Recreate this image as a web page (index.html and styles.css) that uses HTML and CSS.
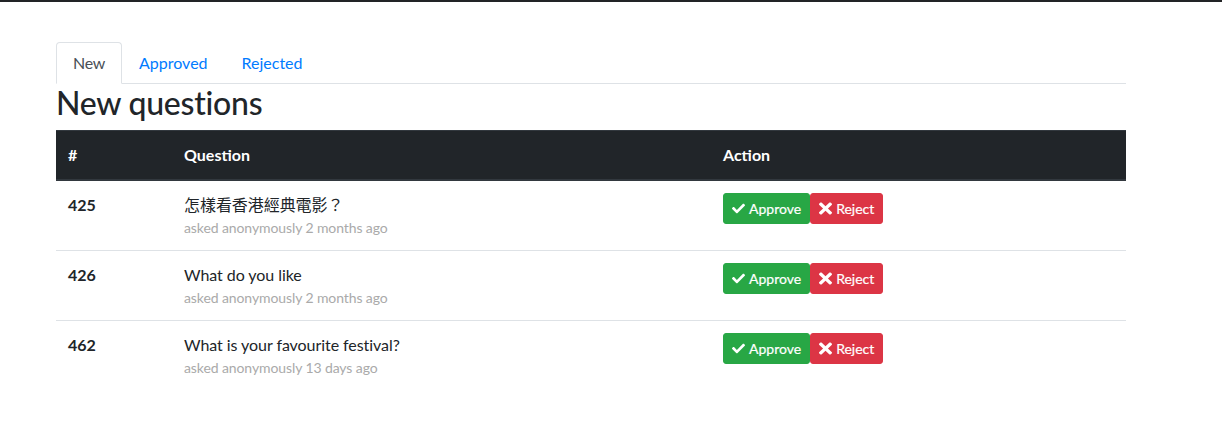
FILE: index.html
```html
<!DOCTYPE html>
<html lang="en">
<head>
<meta charset="utf-8">
<title>New questions</title>
<link rel="stylesheet" href="styles.css">
</head>
<body>
<div class="topbar"></div>
<div class="container">
  <ul class="tabs">
    <li class="tab active">New</li>
    <li class="tab">Approved</li>
    <li class="tab">Rejected</li>
  </ul>
  <h2 class="title">New questions</h2>
  <table class="qtable">
    <thead>
      <tr><th class="c-id">#</th><th class="c-q">Question</th><th class="c-a">Action</th></tr>
    </thead>
    <tbody>
      <tr>
        <td class="num">425</td>
        <td><div class="q">怎樣看香港經典電影？</div><div class="meta">asked anonymously 2 months ago</div></td>
        <td><span class="btns"><button class="btn ok"><svg class="ic-check" viewBox="0 0 512 512"><path d="M173.898 439.404l-166.4-166.4c-9.997-9.997-9.997-26.206 0-36.204l36.203-36.204c9.997-9.998 26.207-9.998 36.204 0L192 312.69 432.095 72.596c9.997-9.997 26.207-9.997 36.204 0l36.203 36.204c9.997 9.997 9.997 26.206 0 36.204l-294.4 294.401c-9.998 9.997-26.207 9.997-36.204-.001z"/></svg> Approve</button><button class="btn no"><svg class="ic-x" viewBox="0 64 352 384" preserveAspectRatio="none"><path d="M242.72 256l100.07-100.07c12.28-12.28 12.28-32.19 0-44.48l-22.24-22.24c-12.28-12.28-32.19-12.28-44.48 0L176 189.28 75.930 89.21c-12.28-12.28-32.19-12.28-44.48 0L9.21 111.45c-12.28 12.28-12.28 32.19 0 44.48L109.28 256 9.21 356.07c-12.28 12.280-12.28 32.19 0 44.48l22.24 22.24c12.28 12.28 32.2 12.28 44.48 0L176 322.72l100.07 100.07c12.28 12.28 32.2 12.28 44.48 0l22.24-22.24c12.28-12.28 12.28-32.19 0-44.48L242.72 256z"/></svg> Reject</button></span></td>
      </tr>
      <tr>
        <td class="num">426</td>
        <td><div class="q">What do you like</div><div class="meta">asked anonymously 2 months ago</div></td>
        <td><span class="btns"><button class="btn ok"><svg class="ic-check" viewBox="0 0 512 512"><path d="M173.898 439.404l-166.4-166.4c-9.997-9.997-9.997-26.206 0-36.204l36.203-36.204c9.997-9.998 26.207-9.998 36.204 0L192 312.69 432.095 72.596c9.997-9.997 26.207-9.997 36.204 0l36.203 36.204c9.997 9.997 9.997 26.206 0 36.204l-294.4 294.401c-9.998 9.997-26.207 9.997-36.204-.001z"/></svg> Approve</button><button class="btn no"><svg class="ic-x" viewBox="0 64 352 384" preserveAspectRatio="none"><path d="M242.72 256l100.07-100.07c12.28-12.28 12.28-32.19 0-44.48l-22.24-22.24c-12.28-12.28-32.19-12.28-44.48 0L176 189.28 75.930 89.21c-12.28-12.28-32.19-12.28-44.48 0L9.21 111.45c-12.28 12.280-12.28 32.19 0 44.48L109.28 256 9.21 356.07c-12.28 12.28-12.28 32.19 0 44.48l22.24 22.24c12.28 12.28 32.2 12.28 44.48 0L176 322.72l100.07 100.07c12.28 12.28 32.2 12.28 44.48 0l22.24-22.24c12.28-12.28 12.28-32.19 0-44.48L242.72 256z"/></svg> Reject</button></span></td>
      </tr>
      <tr>
        <td class="num">462</td>
        <td><div class="q">What is your favourite festival?</div><div class="meta">asked anonymously 13 days ago</div></td>
        <td><span class="btns"><button class="btn ok"><svg class="ic-check" viewBox="0 0 512 512"><path d="M173.898 439.404l-166.4-166.4c-9.997-9.997-9.997-26.206 0-36.204l36.203-36.204c9.997-9.998 26.207-9.998 36.204 0L192 312.69 432.095 72.596c9.997-9.997 26.207-9.997 36.204 0l36.203 36.204c9.997 9.997 9.997 26.206 0 36.204l-294.4 294.401c-9.998 9.997-26.207 9.997-36.204-.001z"/></svg> Approve</button><button class="btn no"><svg class="ic-x" viewBox="0 64 352 384" preserveAspectRatio="none"><path d="M242.72 256l100.07-100.07c12.28-12.28 12.28-32.19 0-44.48l-22.24-22.240c-12.28-12.28-32.19-12.28-44.48 0L176 189.28 75.930 89.21c-12.28-12.28-32.19-12.28-44.48 0L9.21 111.45c-12.28 12.28-12.28 32.19 0 44.48L109.28 256 9.21 356.07c-12.28 12.28-12.28 32.19 0 44.48l22.24 22.24c12.28 12.28 32.2 12.28 44.48 0L176 322.72l100.07 100.07c12.28 12.28 32.2 12.28 44.48 0l22.24-22.24c12.28-12.28 12.28-32.19 0-44.48L242.72 256z"/></svg> Reject</button></span></td>
      </tr>
    </tbody>
  </table>
</div>
</body>
</html>
```
FILE: styles.css
```css
* { box-sizing: border-box; }
html, body { margin: 0; padding: 0; background: #fff; }
body {
  font-family: Lato, "Noto Sans CJK TC", sans-serif;
  font-size: 16px;
  line-height: 1.5;
  color: #212529;
}
.topbar { height: 2px; background: #222426; }
.container { width: 1070px; margin-left: 56px; padding-top: 40px; }
.tabs {
  list-style: none;
  margin: 0;
  padding: 0;
  display: flex;
  border-bottom: 1px solid #dee2e6;
}
.tab {
  padding: 8px 16px;
  margin-bottom: -1px;
  border: 1px solid transparent;
  border-top-left-radius: 4px;
  border-top-right-radius: 4px;
  color: #007bff;
  line-height: 24px;
}
.tab.active {
  color: #495057;
  background: #fff;
  border-color: #dee2e6 #dee2e6 #fff;
  letter-spacing: -0.3px;
}
.title {
  margin: 0 0 8px;
  font-size: 32px;
  font-weight: 500;
  line-height: 1.2;
  letter-spacing: -0.25px;
}
.qtable { width: 100%; border-collapse: collapse; }
.qtable th, .qtable td {
  padding: 12px;
  text-align: left;
  vertical-align: top;
  border-top: 1px solid #dee2e6;
}
.qtable thead th {
  background: #212529;
  color: #fff;
  font-weight: 700;
  border-top: 1px solid #32383e;
  border-bottom: 2px solid #32383e;
}
.qtable tbody tr:first-child td { border-top: 0; }
.c-id { width: 116px; }
.c-q { width: 539px; }
.num { font-weight: 700; }
.q { letter-spacing: -0.06px; }
.meta { font-size: 14px; line-height: 21px; color: #aaa; letter-spacing: -0.1px; }
.btns { display: inline-flex; }
.btn {
  display: inline-flex;
  align-items: center;
  gap: 4px;
  font-family: Lato, sans-serif;
  font-size: 14px;
  line-height: 21px;
  padding: 4px 8px;
  border: 1px solid transparent;
  border-radius: 3px;
  color: #fff;
  cursor: pointer;
  -webkit-text-stroke: 0.2px #fff;
}
.btn svg { fill: #fff; display: block; }
.ic-check { width: 13px; height: 13px; }
.ic-x { width: 13px; height: 13px; }
.ok { background: #28a745; border-color: #28a745; }
.no { background: #dc3545; border-color: #dc3545; }
```
